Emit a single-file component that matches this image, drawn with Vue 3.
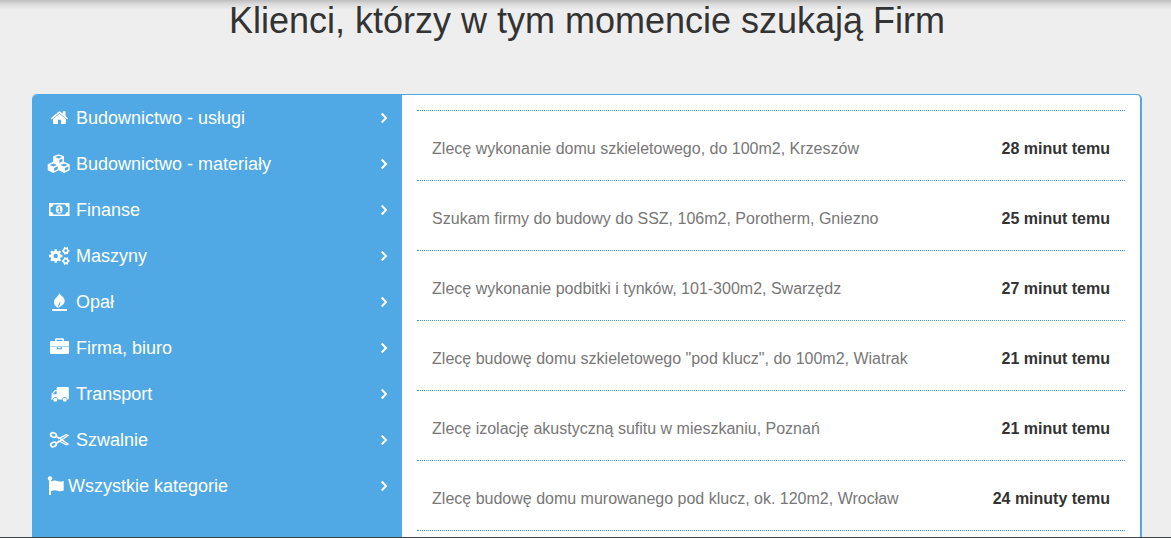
<script setup>
const categories = [
  { icon: 'home', label: 'Budownictwo - usługi' },
  { icon: 'cubes', label: 'Budownictwo - materiały' },
  { icon: 'money', label: 'Finanse' },
  { icon: 'cogs', label: 'Maszyny' },
  { icon: 'fire', label: 'Opał' },
  { icon: 'case', label: 'Firma, biuro' },
  { icon: 'truck', label: 'Transport' },
  { icon: 'scissors', label: 'Szwalnie' },
  { icon: 'flag', label: 'Wszystkie kategorie' },
]

const requests = [
  { title: 'Zlecę wykonanie domu szkieletowego, do 100m2, Krzeszów', time: '28 minut temu' },
  { title: 'Szukam firmy do budowy do SSZ, 106m2, Porotherm, Gniezno', time: '25 minut temu' },
  { title: 'Zlecę wykonanie podbitki i tynków, 101-300m2, Swarzędz', time: '27 minut temu' },
  { title: 'Zlecę budowę domu szkieletowego "pod klucz", do 100m2, Wiatrak', time: '21 minut temu' },
  { title: 'Zlecę izolację akustyczną sufitu w mieszkaniu, Poznań', time: '21 minut temu' },
  { title: 'Zlecę budowę domu murowanego pod klucz, ok. 120m2, Wrocław', time: '24 minuty temu' },
]
</script>

<template>
  <main class="page">
    <h1 class="title">Klienci, którzy w tym momencie szukają Firm</h1>
    <section class="card">
      <nav class="sidebar">
        <a v-for="c in categories" :key="c.icon" href="#" class="category">
          <svg class="icon" :class="{ narrow: c.icon === 'flag' }" :viewBox="c.icon === 'flag' ? '0 0 17 20' : '0 0 24 20'" aria-hidden="true">
            <g v-if="c.icon === 'home'">
              <path d="M12.500 5.800 18.900 11v4.300q0 .7-.7.700H14v-4.300h-3V16H6.800q-.7 0-.7-.7V11z" />
              <path d="M3.800 10.300 11.600 3.700q.9-.8 1.800 0L15.800 5.700V3.300h2.700v4.700l2.700 2.300-.9 1.200-7.800-6.500-7.800 6.500z" />
            </g>
            <g v-else-if="c.icon === 'cubes'" fill-rule="evenodd">
              <path d="M11.700.2 17 2.300v5.400l5.700 2.500v6l-5.600 2.700-5.400-2.600-5.400 2.600-5.600-2.700v-6l5.500-2.500V2.300zM8.200 3.100l3.500 1.500 3.500-1.500-3.500-1.400zM12.400 5.900v3l3-1.400V4.600zM2.700 11l3.600 1.600L9.900 11 6.300 9.500zM7.100 14v3l3.700-1.800v-3zM13.500 11l3.600 1.600 3.600-1.600-3.600-1.500zM17.900 14v3l3.500-1.700v-2.900z" />
            </g>
            <g v-else-if="c.icon === 'money'" fill-rule="evenodd">
              <path d="M2 3h20.500v13H2zM6.300 4.500Q6.100 7 3.500 7.200v4.600q2.600.2 2.800 2.700h12q.2-2.500 2.700-2.700V7.200q-2.500-.2-2.700-2.700z" />
              <path d="M12.200 5.300c2.200 0 3.400 1.900 3.400 4.200s-1.200 4.200-3.400 4.200-3.400-1.900-3.400-4.200 1.200-4.200 3.400-4.200zM11.800 7l-1.600 1.300.7.8.8-.5v2.700h-1.100v1h3.400v-1h-1.100V7z" />
            </g>
            <g v-else-if="c.icon === 'cogs'" class="line">
              <circle cx="8.700" cy="10" r="3.700" stroke-width="3" />
              <path d="M8.700 3.300v2.500M8.700 14.200v2.500M2 10h2.500M12.900 10h2.500M4 5.300l1.700 1.700M11.700 13l1.700 1.700M13.400 5.300l-1.700 1.700M5.700 13 4 14.700" stroke-width="2.300" />
              <circle cx="18.700" cy="4.700" r="2.200" stroke-width="1.600" />
              <path d="M17.600.9l.5 1.700M20.500 1.200l-.7 1.500M22.600 4.700H21M20.500 8.200l-.7-1.500M17.600 8.500l.5-1.700M15 4.700h1.500" stroke-width="1.500" />
              <circle cx="18.700" cy="15" r="2.200" stroke-width="1.600" />
              <path d="M17.600 11.200l.5 1.700M20.500 11.500l-.7 1.500M22.600 15H21M20.500 18.500l-.7-1.500M17.600 18.800l.5-1.700M15 15h1.500" stroke-width="1.500" />
            </g>
            <g v-else-if="c.icon === 'fire'">
              <path d="M12 .1c-.7 2.900 5.700 3.900 5.700 8.800 0 3.700-4 4.800-6.400 7.100.3-2.300 2.600-3.700 1.900-6.600-.8 2-2.400 3-2 6.600C8.600 14.500 6.600 12.500 7 9.400 7.400 5.900 12.700 4.700 12 .1z" />
              <path d="M5 17h15v2H5z" />
            </g>
            <g v-else-if="c.icon === 'case'">
              <path fill-rule="evenodd" d="M8 3V1.500Q8 .3 9.200.3h6.600Q17 .3 17 1.500V3h3.700Q22 3 22 4.300v4.200H3V4.300Q3 3 4.300 3zM9.500 3h6V1.700h-6z" />
              <path d="M3 9.100h7v2.200h5V9.100h7v5.600q0 1.300-1.300 1.300H4.300Q3 16 3 14.700zM11.200 9.100h2.600v1.200h-2.600z" />
            </g>
            <g v-else-if="c.icon === 'truck'">
              <path fill-rule="evenodd" d="M10.500 3H21q.8 0 .8.800v11q0 .8-1 .8h-.5a2.500 2.500 0 0 0-5 0h-4.500a2.500 2.500 0 0 0-5 0H4.600q-.6 0-.6-.6l.6-1V9.500L8 6h1.700V3.800q0-.8.8-.8zM8.500 7.300 6 9.900v.3h3.700V7.300z" />
              <circle cx="8.300" cy="15.800" r="2" /><circle cx="17.800" cy="15.800" r="2" />
            </g>
            <g v-else-if="c.icon === 'scissors'" class="line">
              <ellipse cx="6.500" cy="5" rx="2.900" ry="2.100" transform="rotate(20 6.500 5)" stroke-width="1.700" />
              <ellipse cx="6.500" cy="14.500" rx="2.900" ry="2.100" transform="rotate(-20 6.500 14.500)" stroke-width="1.700" />
              <path d="m9 6.300 3 2.200 7.200-3.900 1.900.8-8.200 5.700-4 2.600M9 13.200l3-2.200 7.200 3.900 1.900-.8-8.200-5.700-4-2.100" stroke-width="1.300" />
            </g>
            <g v-else>
              <circle cx="3" cy="2.400" r="2.200" />
              <path d="M2 3h2v16H2z" />
              <path d="M4 5.500Q7.500 3.700 10.500 5q3 1.200 6.200 0v9.500q-3.200 1.400-6.200.2-3-1.200-6.500.5z" />
            </g>
          </svg>
          <span>{{ c.label }}</span>
          <svg class="chevron" viewBox="0 0 8 12" aria-hidden="true"><path d="M1.700 1.500 6 6l-4.300 4.500" /></svg>
        </a>
      </nav>
      <div class="list">
        <a v-for="r in requests" :key="r.title" href="#" class="request">
          <span>{{ r.title }}</span>
          <strong>{{ r.time }}</strong>
        </a>
      </div>
    </section>
  </main>
</template>

<style>
html, body, #app { height: 100%; }
body { margin: 0; overflow: hidden; }
</style>

<style scoped>
.page {
  box-sizing: border-box;
  height: 100%;
  padding: 0 29px 0 32px;
  display: flex;
  flex-direction: column;
  overflow: hidden;
  border-bottom: 1px solid #3d4246;
  background: linear-gradient(#bdbdbd, #dadada 4px, #eee 10px);
  font-family: "Liberation Sans", Arial, sans-serif;
}
.title {
  margin: 0 0 52px;
  font-size: 36px;
  line-height: 42px;
  font-weight: 400;
  color: #333;
  text-align: center;
}
.card {
  flex: 1 0 auto;
  display: flex;
  box-sizing: border-box;
  border: solid #50a9e5;
  border-width: 1px 2px 0 0;
  border-radius: 5px 5px 0 0;
  overflow: hidden;
  background: #fff;
}
.sidebar {
  box-sizing: border-box;
  flex: 0 0 33.4%;
  padding: 0 14px 0 15px;
  background: #50a9e5;
}
.category {
  display: flex;
  align-items: center;
  height: 46px;
  color: #fff;
  font-size: 18px;
  line-height: 26px;
  text-decoration: none;
}
.icon {
  width: 24px;
  height: 20px;
  margin-right: 5px;
  fill: #fff;
}
.icon.narrow { width: 17px; margin-right: 4px; }
.line { fill: none; stroke: #fff; }
.chevron {
  width: 8px;
  height: 12px;
  margin-left: auto;
  fill: none;
  stroke: #fff;
  stroke-width: 2;
}
.list {
  flex: 1;
  margin: 15px 15px 0;
  border-top: 1px dotted #429bd5;
}
.request {
  display: flex;
  align-items: center;
  justify-content: space-between;
  height: 69px;
  padding: 0 15px;
  border-bottom: 1px dotted #429bd5;
  color: #777;
  font-size: 16px;
  line-height: 24px;
  text-decoration: none;
}
.request span, .request strong { padding-top: 6px; }
.request strong { color: #333; }
</style>
